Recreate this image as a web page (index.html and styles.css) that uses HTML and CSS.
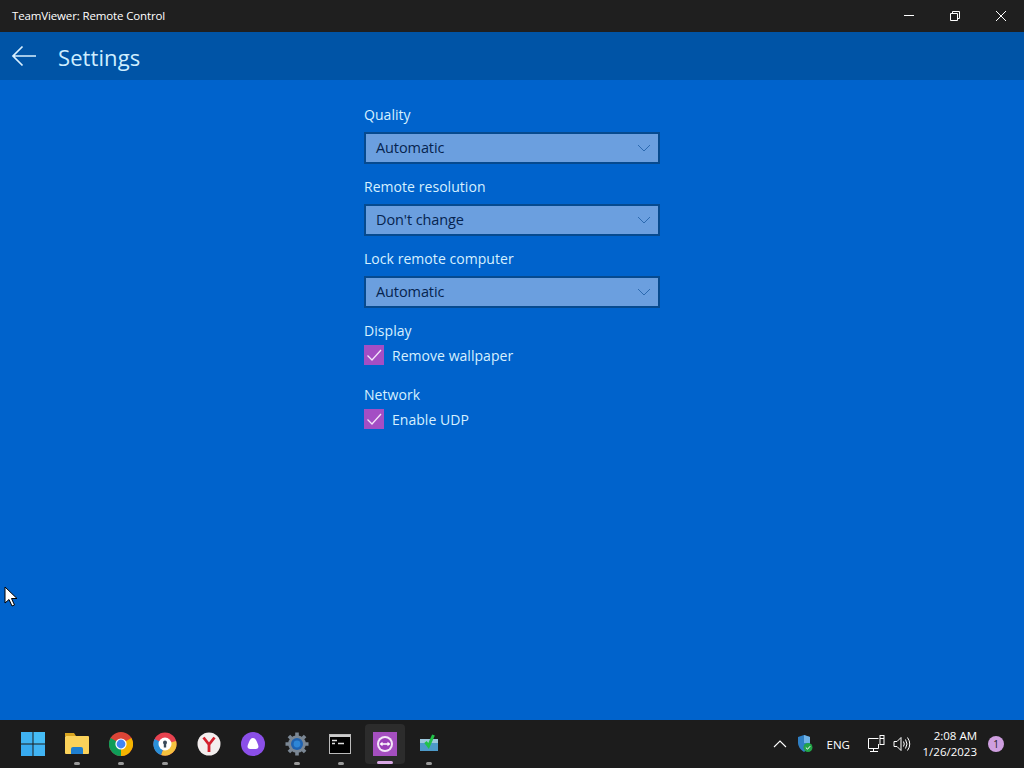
FILE: index.html
```html
<!DOCTYPE html>
<html lang="en">
<head>
<meta charset="utf-8">
<title>TeamViewer: Remote Control</title>
<link rel="stylesheet" href="styles.css">
</head>
<body>
<div class="window">
  <div class="titlebar">
    <span class="title">TeamViewer: Remote Control</span>
    <div class="winctl">
      <span class="winbtn"><svg width="12" height="12" viewBox="0 0 12 12"><path d="M1 5.500h10" stroke="#fff" fill="none"/></svg></span>
      <span class="winbtn"><svg width="12" height="12" viewBox="0 0 12 12"><path d="M1.500 3.500h7v7h-7zM3.500 3.500v-2h7v7h-2" stroke="#fff" fill="none"/></svg></span>
      <span class="winbtn"><svg width="12" height="12" viewBox="0 0 12 12"><path d="M1 1l10 10M11 1L1 11" stroke="#fff" fill="none"/></svg></span>
    </div>
  </div>
  <header class="appbar">
    <svg class="back" width="26" height="22" viewBox="0 0 26 22"><path d="M25 11H2M11.500 1.500L2 11l9.500 9.500" stroke="#d8f0ff" stroke-width="1.700" fill="none"/></svg>
    <h1 class="heading">Settings</h1>
  </header>
  <main class="content">
    <div class="form">
      <div class="field">
        <label class="label">Quality</label>
        <div class="select"><span>Automatic</span><svg class="chev" width="14" height="8" viewBox="0 0 14 8"><path d="M1 1l6 6 6-6" stroke="#2c6ab0" stroke-width="1" fill="none"/></svg></div>
      </div>
      <div class="field">
        <label class="label">Remote resolution</label>
        <div class="select"><span>Don't change</span><svg class="chev" width="14" height="8" viewBox="0 0 14 8"><path d="M1 1l6 6 6-6" stroke="#2c6ab0" stroke-width="1" fill="none"/></svg></div>
      </div>
      <div class="field">
        <label class="label">Lock remote computer</label>
        <div class="select"><span>Automatic</span><svg class="chev" width="14" height="8" viewBox="0 0 14 8"><path d="M1 1l6 6 6-6" stroke="#2c6ab0" stroke-width="1" fill="none"/></svg></div>
      </div>
      <div class="group">
        <div class="label">Display</div>
        <div class="check"><span class="box"><svg width="20" height="20" viewBox="0 0 20 20"><path d="M3.500 10.500l4.500 4.500 9-10" stroke="#f4e4fa" stroke-width="1.300" fill="none"/></svg></span><span>Remove wallpaper</span></div>
      </div>
      <div class="group">
        <div class="label">Network</div>
        <div class="check"><span class="box"><svg width="20" height="20" viewBox="0 0 20 20"><path d="M3.500 10.500l4.500 4.500 9-10" stroke="#f4e4fa" stroke-width="1.300" fill="none"/></svg></span><span>Enable UDP</span></div>
      </div>
    </div>
    <svg class="cursor" width="14" height="22" viewBox="0 0 14 22"><path d="M1 1v16l4-3.500 3 6.500 2.500-1-3-6.500h5.500z" fill="#fff" stroke="#000" stroke-width="1"/></svg>
  </main>
  <footer class="taskbar">
    <div class="apps">
      <div class="app"><svg width="24" height="24" viewBox="0 0 24 24"><rect x="0" y="0" width="11.500" height="11.500" fill="#3fb2f2"/><rect x="12.500" y="0" width="11.500" height="11.500" fill="#45bcf6"/><rect x="0" y="12.500" width="11.500" height="11.500" fill="#37aaf0"/><rect x="12.500" y="12.500" width="11.500" height="11.500" fill="#41b4f4"/></svg></div>
      <div class="app on"><svg width="26" height="24" viewBox="0 0 26 24"><path d="M1 1h9l2 3h-11z" fill="#d9a520"/><rect x="1" y="4" width="24" height="18" rx="1" fill="#fbd25a"/><path d="M7 22v-5q0-2 2-2h8q2 0 2 2v5z" fill="#1f7fd0"/></svg></div>
      <div class="app on"><svg width="24" height="24" viewBox="0 0 24 24"><circle cx="12" cy="12" r="12" fill="#db4437"/><path d="M12 12L22.400 6A12 12 0 0 1 12 24z" fill="#f4b400"/><path d="M12 12L12 24A12 12 0 0 1 1.600 6z" fill="#0f9d58"/><circle cx="12" cy="12" r="5.600" fill="#fff"/><circle cx="12" cy="12" r="4.400" fill="#4285f4"/></svg></div>
      <div class="app on"><svg width="24" height="24" viewBox="0 0 24 24"><circle cx="12" cy="12" r="11.500" fill="#e8424f"/><path d="M12 12L23 9A11.500 11.500 0 0 1 8 23z" fill="#f5c23e"/><path d="M12 12L8 23A11.500 11.500 0 0 1 1.500 7z" fill="#2a8fd8"/><circle cx="12" cy="12" r="6.500" fill="#fff"/><rect x="10.800" y="11" width="2.400" height="4.500" fill="#3a4a5a"/><circle cx="12" cy="10.500" r="2" fill="#3a4a5a"/></svg></div>
      <div class="app"><svg width="24" height="24" viewBox="0 0 24 24"><circle cx="12" cy="12" r="11.500" fill="#f3eeee"/><path d="M6.500 5.500L12 12.500 17.500 5.500M12 12.500V20" stroke="#d3202e" stroke-width="2.800" fill="none"/></svg></div>
      <div class="app"><svg width="24" height="24" viewBox="0 0 24 24"><circle cx="12" cy="12" r="12" fill="#8b4fe8"/><path d="M12 6c2 0 3.200 2 4.200 4.500 1 2.500 1.800 4 .8 5.500-1 1.400-3 1-5 1s-4 .4-5-1c-1-1.500-.2-3 .8-5.500C8.800 8 10 6 12 6z" fill="#fff"/></svg></div>
      <div class="app on"><svg width="24" height="24" viewBox="0 0 24 24"><circle cx="12" cy="12" r="8.800" fill="#7b8794"/><g stroke="#7b8794" stroke-width="3.600"><path d="M12 0.500v23M0.500 12h23M3.900 3.900l16.200 16.200M20.100 3.900L3.900 20.100"/></g><circle cx="12" cy="12" r="6" fill="#1f62b0"/><circle cx="12" cy="12" r="3.400" fill="#2e86d6"/></svg></div>
      <div class="app on"><svg class="term" width="22" height="20" viewBox="0 0 22 20"><rect x="0.500" y="0.500" width="21" height="19" fill="#000" stroke="#bbb"/><rect x="1" y="1" width="20" height="2" fill="#ccc"/><path d="M3 6.500h5M3 9.500h3M9 9.500h6" stroke="#ddd" stroke-width="1.300"/></svg></div>
      <div class="app active"><svg width="24" height="24" viewBox="0 0 24 24"><rect width="24" height="24" fill="#a54fc0"/><circle cx="12" cy="12" r="8" fill="#f3e6f7"/><circle cx="12" cy="12" r="6" fill="#9a3fb8"/><path d="M6.500 12l3-2.200v1.400h5V9.800l3 2.200-3 2.200v-1.400h-5v1.400z" fill="#fff"/></svg></div>
      <div class="app on"><svg width="20" height="20" viewBox="0 0 20 20"><rect x="1" y="5" width="18" height="12" fill="#4d9ac9"/><rect x="1" y="5" width="18" height="4" fill="#9cc8dd"/><path d="M6.500 8l3 4 5-11" stroke="#21c24a" stroke-width="3" fill="none"/></svg></div>
    </div>
    <div class="tray">
      <svg class="t-chev" width="14" height="8" viewBox="0 0 14 8"><path d="M1 7l6-6 6 6" stroke="#fff" stroke-width="1.100" fill="none"/></svg>
      <svg class="t-shield" width="16" height="18" viewBox="0 0 16 18"><path d="M1 2l6-2 6 2v6q0 5-6 9-6-4-6-9z" fill="#2f7fc4"/><path d="M7 0l6 2v6H7z" fill="#6fb2e6"/><circle cx="11" cy="12.500" r="4.500" fill="#22a447"/><path d="M8.800 12.500l1.700 1.700 2.700-3" stroke="#fff" stroke-width="1" fill="none"/></svg>
      <span class="lang">ENG</span>
      <svg class="t-net" width="18" height="18" viewBox="0 0 18 18"><path d="M11.500 3.500H1.500v10h10M6.500 13.500v3M3 16.500h8" stroke="#fff" fill="none"/><rect x="13" y="0.500" width="4" height="9" fill="none" stroke="#fff"/><path d="M13 3.500h4M11.500 13.500V9" stroke="#fff" fill="none"/></svg>
      <svg class="t-vol" width="18" height="16" viewBox="0 0 18 16"><path d="M1 5.500h3l4-4v13l-4-4H1zM10.500 5.500q1.500 2.500 0 5M12.500 3.500q3 4.500 0 9M14.500 1.500q4.500 6.500 0 13" stroke="#fff" fill="none"/></svg>
      <div class="clock"><span>2:08 AM</span><span>1/26/2023</span></div>
      <span class="badge">1</span>
    </div>
  </footer>
</div>
</body>
</html>
```
FILE: styles.css
```css
* { box-sizing: border-box; }
html, body { margin: 0; padding: 0; }
body { font-family: "Open Sans", "Noto Sans", sans-serif; }
.window { width: 1024px; height: 768px; display: flex; flex-direction: column; overflow: hidden; }

.titlebar { height: 32px; flex: none; background: #1f1f1f; color: #fff; display: flex; align-items: center; justify-content: space-between; padding-left: 12px; }
.title { font-size: 11.500px; letter-spacing: -0.14px; margin-top: -1px; }
.winctl { display: flex; }
.winbtn { width: 46px; height: 32px; display: flex; align-items: center; justify-content: center; }

.appbar { height: 48px; flex: none; background: #0054a6; display: flex; align-items: center; padding-left: 11px; }
.back { flex: none; margin-top: -1px; }
.heading { margin: 1px 0 0 21px; font-size: 22px; font-weight: 400; color: #cfeeff; letter-spacing: 0.08px; }

.content { flex: 1; position: relative; background: #0063cc; display: flex; justify-content: center; padding-top: 24px; }
.form { width: 296px; display: flex; flex-direction: column; }
.field { height: 72px; display: flex; flex-direction: column; }
.label { height: 22px; font-size: 14px; line-height: 22px; color: #d6f0ff; letter-spacing: 0.05px; display: block; }
.select { margin-top: 6px; height: 32px; border: 2px solid #064a8f; background: #6b9fdf; color: #06244f; font-size: 14.500px; line-height: 26px; display: flex; align-items: center; justify-content: space-between; padding: 0 7px 0 10px; letter-spacing: -0.1px; }
.chev { flex: none; }
.group { height: 64px; display: flex; flex-direction: column; }
.check { display: flex; align-items: center; gap: 8px; height: 20px; margin-top: 3px; font-size: 14px; color: #d6f0ff; letter-spacing: 0.04px; }
.box { width: 20px; height: 20px; background: #a44ec4; flex: none; display: flex; }
.cursor { position: absolute; left: 4px; top: 506px; }

.taskbar { height: 48px; flex: none; background: #1c1c1c; display: flex; justify-content: space-between; padding-left: 11px; color: #fff; }
.apps { display: flex; }
.app { width: 44px; height: 40px; margin-top: 4px; display: flex; align-items: center; justify-content: center; position: relative; border-radius: 4px; }
.app.on::after { content: ""; position: absolute; left: 19px; bottom: -1px; width: 6px; height: 3px; border-radius: 2px; background: #9a9a9a; }
.app.active { width: 40px; margin-left: 2px; margin-right: 2px; background: #2c2c2c; }
.app.active::after { content: ""; position: absolute; left: 12px; bottom: 0; width: 16px; height: 3px; border-radius: 2px; background: #d8a8e4; }
.term { margin-right: 2px; }
.tray { display: flex; align-items: center; padding-right: 20px; }
.t-chev { margin-right: 10px; }
.t-shield { margin-right: 14px; }
.lang { font-size: 11.500px; width: 28px; margin-right: 12px; }
.t-net { margin-right: 8px; }
.t-vol { margin-right: 12px; }
.clock { display: flex; flex-direction: column; align-items: flex-end; font-size: 11.500px; line-height: 16px; margin-right: 11px; }
.badge { width: 16px; height: 16px; border-radius: 50%; background: #cf9fe0; color: #222; font-size: 10px; display: flex; align-items: center; justify-content: center; }
```
